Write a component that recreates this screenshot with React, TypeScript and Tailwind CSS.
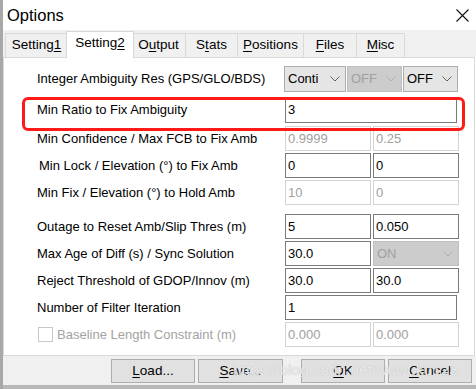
import React from "react";

const U = ({ children }: { children: React.ReactNode }) => <span className="underline underline-offset-2">{children}</span>;

const Chevron = ({ disabled }: { disabled?: boolean }) => (
  <svg width="10" height="6" viewBox="0 0 10 6" className="shrink-0">
    <path d="M0.5 0.5 L5 5 L9.5 0.5" fill="none" stroke={disabled ? "#b0b0b0" : "#606060"} strokeWidth="1" />
  </svg>
);

const Select = ({ value, w, disabled }: { value: string; w: string; disabled?: boolean }) => (
  <div
    className={`${w} h-full flex items-center justify-between pl-[3px] pr-[5px] border ${
      disabled ? "bg-[#cccccc] border-[#bfbfbf] text-[#a0a0a0]" : "bg-[#e5e5e5] border-[#adadad] text-black"
    }`}
  >
    <span>{value}</span>
    <Chevron disabled={disabled} />
  </div>
);

const Input = ({ value, w, disabled }: { value: string; w: string; disabled?: boolean }) => (
  <div
    className={`${w} h-full flex items-center pl-[2px] border bg-white ${
      disabled ? "border-[#d4d4d4] text-[#a0a0a0]" : "border-[#7a7a7a] text-black"
    }`}
  >
    {value}
  </div>
);

const Row = ({ label, mt, h, children, indent }: { label: React.ReactNode; mt: string; h: string; children: React.ReactNode; indent?: string }) => (
  <div className={`flex items-center ${mt} ${h}`}>
    <div className={`w-[248px] shrink-0 whitespace-nowrap ${indent ?? ""}`}>{label}</div>
    <div className="flex gap-[2px] h-full">{children}</div>
  </div>
);

const tabs = [
  { w: "w-[63px]", label: <>Setting<U>1</U></> },
  { w: "w-[68px]", label: <>Setting<U>2</U></>, active: true },
  { w: "w-[55px]", label: <>O<U>u</U>tput</> },
  { w: "w-[53px]", label: <>S<U>t</U>ats</> },
  { w: "w-[67px]", label: <><U>P</U>ositions</> },
  { w: "w-[54px]", label: <><U>F</U>iles</> },
  { w: "w-[49px]", label: <><U>M</U>isc</> },
];

export default function App() {
  return (
    <div className="relative w-[476px] h-[389px] overflow-hidden flex bg-white font-['Liberation_Sans',Arial,sans-serif] text-[13px] text-black">
      <div className="w-[3px] shrink-0 bg-[#a8a8a8]" />
      <div className="flex-1 flex flex-col">
        {/* title bar */}
        <div className="h-[30px] shrink-0 flex items-center justify-between pl-[4px] pr-[7px] bg-white">
          <span className="text-[16.5px] leading-none">Options</span>
          <svg width="13" height="13" viewBox="0 0 13 13">
            <path d="M0.5 0.5 L12.5 12.5 M12.5 0.5 L0.5 12.5" stroke="#111" strokeWidth="1.1" />
          </svg>
        </div>

        {/* tabs */}
        <div className="h-[27px] shrink-0 bg-[#f0f0f0] flex items-end pl-[2px] text-[13.5px]">
          {tabs.map((t, i) =>
            t.active ? (
              <div
                key={i}
                className={`${t.w} -mx-[2px] h-[27px] -mb-[1px] relative z-10 bg-white border border-b-0 border-[#d9d9d9] flex items-center justify-center pb-[3px]`}
              >
                {t.label}
              </div>
            ) : (
              <div
                key={i}
                className={`${t.w} h-[24px] bg-[#f0f0f0] border border-b-0 border-[#d9d9d9] -ml-[1px] first:ml-0 flex items-center justify-center`}
              >
                {t.label}
              </div>
            )
          )}
        </div>

        {/* panel */}
        <div className="h-[299px] shrink-0 bg-white border border-[#d9d9d9] mr-[1px] pl-[33px] pt-[8px]">
          <Row label="Integer Ambiguity Res (GPS/GLO/BDS)" mt="mt-0" h="h-[26px]">
            <div className="flex gap-[1px] h-full -ml-[1px]">
              <Select value="Conti" w="w-[62px]" />
              <Select value="OFF" w="w-[55px]" disabled />
              <Select value="OFF" w="w-[55px]" />
            </div>
          </Row>
          <div className="relative">
            <Row label="Min Ratio to Fix Ambiguity" mt="mt-[5px]" h="h-[26px]">
              <Input value="3" w="w-[172px]" />
            </Row>
            <div className="absolute left-[-15px] right-[9px] top-0 h-[34px] border-[3px] border-[#ff1a1a] rounded-[6px] pointer-events-none" />
          </div>
          <Row label="Min Confidence / Max FCB to Fix Amb" mt="mt-[3px]" h="h-[25px]">
            <Input value="0.9999" w="w-[86px]" disabled />
            <Input value="0.25" w="w-[86px]" disabled />
          </Row>
          <Row label="Min Lock / Elevation (°) to Fix Amb" mt="mt-[2px]" h="h-[25px]" indent="pl-[2px]">
            <Input value="0" w="w-[86px]" />
            <Input value="0" w="w-[86px]" />
          </Row>
          <Row label="Min Fix / Elevation (°) to Hold Amb" mt="mt-[2px]" h="h-[25px]">
            <Input value="10" w="w-[86px]" disabled />
            <Input value="0" w="w-[86px]" disabled />
          </Row>
          <Row label="Outage to Reset Amb/Slip Thres (m)" mt="mt-[9px]" h="h-[25px]">
            <Input value="5" w="w-[86px]" />
            <Input value="0.050" w="w-[86px]" />
          </Row>
          <Row label="Max Age of Diff (s) / Sync Solution" mt="mt-[2px]" h="h-[25px]">
            <Input value="30.0" w="w-[86px]" />
            <Select value="ON" w="w-[86px]" disabled />
          </Row>
          <Row label="Reject Threshold of GDOP/Innov (m)" mt="mt-[2px]" h="h-[25px]">
            <Input value="30.0" w="w-[86px]" />
            <Input value="30.0" w="w-[86px]" />
          </Row>
          <Row label="Number of Filter Iteration" mt="mt-[2px]" h="h-[25px]">
            <Input value="1" w="w-[172px]" />
          </Row>
          <Row
            label={
              <span className="flex items-center gap-[4px] text-[#a3a3a3]">
                <span className="w-[15px] h-[15px] border border-[#c8c8c8] bg-white ml-[1px]" />
                Baseline Length Constraint (m)
              </span>
            }
            mt="mt-[2px]"
            h="h-[25px]"
          >
            <Input value="0.000" w="w-[86px]" disabled />
            <Input value="0.000" w="w-[86px]" disabled />
          </Row>
        </div>

        {/* buttons */}
        <div className="h-[29px] shrink-0 bg-[#f0f0f0] flex items-start pt-[3px] pl-[108px] text-[13.5px]">
          <div className="w-[84px] h-[24px] bg-[#e1e1e1] border border-[#adadad] flex items-center justify-center">
            <span><U>L</U>oad...</span>
          </div>
          <div className="w-[85px] h-[24px] ml-[3px] bg-[#e1e1e1] border border-[#adadad] flex items-center justify-center">
            <span><U>S</U>ave...</span>
          </div>
          <div className="w-[84px] h-[24px] ml-[18px] bg-[#e1e1e1] border border-[#adadad] flex items-center justify-center">
            <span><U>O</U>K</span>
          </div>
          <div className="w-[84px] h-[24px] ml-[3px] bg-[#e1e1e1] border border-[#adadad] flex items-center justify-center">
            <span><U>C</U>ancel</span>
          </div>
        </div>
        <div className="flex-1 bg-[#b8b8b8]" />
      </div>

      {/* watermark */}
      <div className="absolute left-[233px] top-[362px] text-[15.5px] leading-none text-white/70 [text-shadow:0_0_1px_#b0b0b0] pointer-events-none">
        https://blog.csdn.net/wuwuku123
      </div>
    </div>
  );
}
